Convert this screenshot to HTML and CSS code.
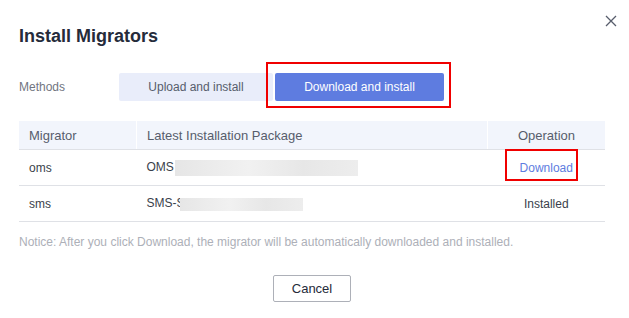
FILE: index.html
```html
<!DOCTYPE html>
<html>
<head>
    <title>Install Migrators</title>
    <link rel="stylesheet" href="styles.css">
</head>
<body>
    <div class="dialog">
        <button class="close" type="button" aria-label="Close">
            <svg width="12" height="12" viewBox="0 0 12 12">
                <path d="M1 1 L11 11 M11 1 L1 11" stroke="#575d6c" stroke-width="1.3" fill="none"/>
            </svg>
        </button>

        <h1 class="title">Install Migrators</h1>

        <div class="methods">
            <span class="methods-label">Methods</span>
            <div class="tabs">
                <button class="tab" type="button">Upload and install</button>
                <button class="tab active marked" type="button">Download and install</button>
            </div>
        </div>

        <table class="table">
            <thead>
                <tr>
                    <th class="col-name">Migrator</th>
                    <th class="col-pkg">Latest Installation Package</th>
                    <th class="col-op">Operation</th>
                </tr>
            </thead>
            <tbody>
                <tr>
                    <td>oms</td>
                    <td>OMS<span class="blur blur-long"></span></td>
                    <td class="col-op"><a href="#" class="link marked-link">Download</a></td>
                </tr>
                <tr>
                    <td>sms</td>
                    <td>SMS-<span class="cut">S</span><span class="blur blur-short"></span></td>
                    <td class="col-op">Installed</td>
                </tr>
            </tbody>
        </table>

        <p class="notice">Notice: After you click Download, the migrator will be automatically downloaded and installed.</p>

        <div class="footer">
            <button class="cancel" type="button">Cancel</button>
        </div>
    </div>
</body>
</html>
```

FILE: styles.css
```css
body {
    margin: 0;
    background: #fff;
    font-family: "Liberation Sans", Arial, sans-serif;
    color: #252b3a;
}
.dialog {
    position: relative;
    padding: 24px 24px 0 19px;
}
.close {
    position: absolute;
    top: 15px;
    right: 12px;
    border: 0;
    background: none;
    padding: 0;
    width: 12px;
    height: 12px;
    display: flex;
}
.title {
    margin: 0;
    font-size: 18px;
    line-height: 24px;
    font-weight: bold;
    color: #252b3a;
}
.methods {
    display: flex;
    align-items: center;
    margin-top: 25px;
}
.methods-label {
    width: 100px;
    font-size: 12px;
    color: #71757f;
}
.tabs {
    display: flex;
    gap: 2px;
}
.tab {
    height: 28px;
    border: 0;
    border-radius: 2px;
    background: #e9edfa;
    color: #575d6c;
    font-family: inherit;
    font-size: 12px;
    padding: 0;
    width: 154px;
}
.tab.active {
    width: 169px;
    background: #5e7ce0;
    color: #fff;
}
.marked {
    position: relative;
}
.marked::after {
    content: "";
    position: absolute;
    top: -11px;
    bottom: -7px;
    left: -9px;
    right: -7px;
    border: 2px solid #f00000;
}
.table {
    width: 586px;
    margin-top: 20px;
    border-collapse: collapse;
    font-size: 12px;
}
.table th {
    height: 28px;
    background: #f2f5fc;
    font-size: 13px;
    font-weight: normal;
    color: #575d6c;
    text-align: left;
    padding: 0 10px;
    border-bottom: 1px solid #dfe1e6;
}
.table th + th {
    border-left: 1px solid #fff;
}
.table td {
    height: 35px;
    padding: 0 10px;
    color: #3a3f4b;
    border-bottom: 1px solid #dfe1e6;
}
.col-name {
    width: 97px;
}
.col-op {
    width: 97px;
    text-align: center !important;
}
.blur {
    display: inline-block;
    vertical-align: middle;
    background: linear-gradient(90deg, #e6e6e6, #f1f1f1 40%, #e7e7e7 70%, #ededed);
}
.blur-long {
    width: 183px;
    height: 16px;
    margin-left: 1px;
}
.blur-short {
    width: 123px;
    height: 13px;
    margin-left: -5px;
}
.cut {
    display: inline-block;
}
.link {
    color: #5e7ce0;
    text-decoration: none;
}
.marked-link {
    position: relative;
}
.marked-link::after {
    content: "";
    position: absolute;
    top: -12px;
    bottom: -6px;
    left: -15px;
    right: -5px;
    border: 2px solid #f00000;
}
.notice {
    margin: 11px 0 0;
    font-size: 12px;
    line-height: 18px;
    color: #adb0b8;
}
.footer {
    display: flex;
    justify-content: center;
    margin-top: 24px;
}
.cancel {
    width: 78px;
    height: 27px;
    border: 1px solid #adb0b8;
    border-radius: 2px;
    background: #fff;
    color: #252b3a;
    font-family: inherit;
    font-size: 13px;
    padding: 0;
}
```
